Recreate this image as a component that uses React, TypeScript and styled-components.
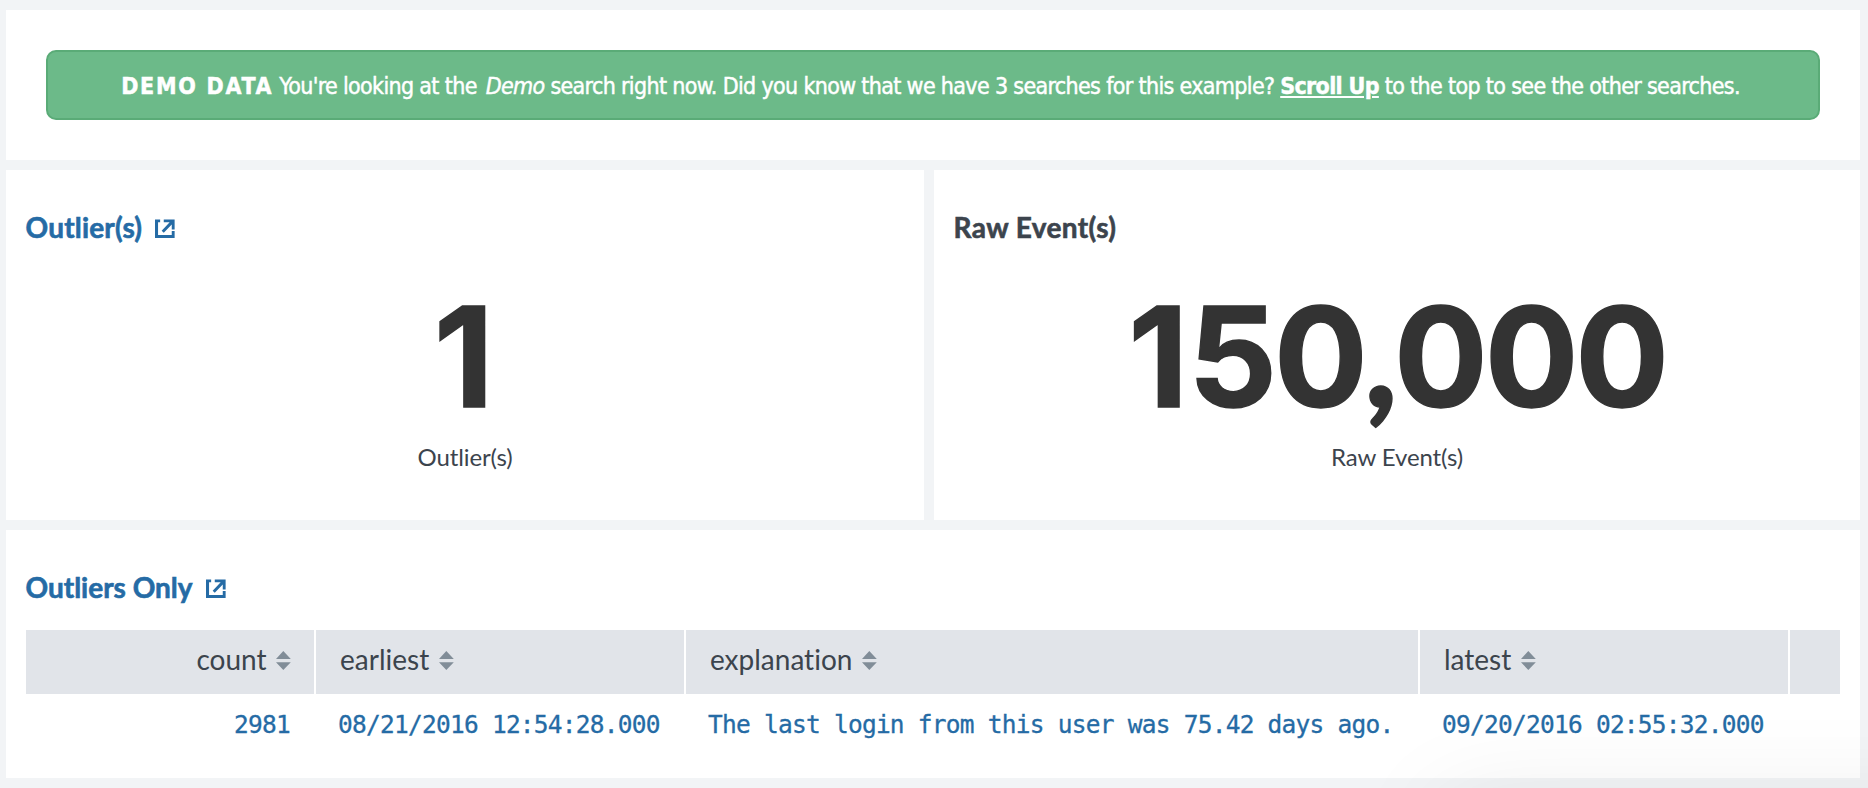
import React from "react";
import styled, { createGlobalStyle, css } from "styled-components";

const sans = `Lato, "Liberation Sans", sans-serif`;
const link = "#256ba5";
const ink = "#3c444d";

const GlobalStyle = createGlobalStyle`
  * { box-sizing: border-box; }
  body { margin: 0; background: #f2f4f6; font-family: ${sans}; color: ${ink}; font-variant-ligatures: none; }
`;

const Dashboard = styled.main`
  position: relative;
  display: flex;
  flex-direction: column;
  gap: 10px;
  height: 788px;
  padding: 10px 8px 10px 6px;
  overflow: hidden;
`;

const PanelRow = styled.div`
  display: grid;
  grid-template-columns: 918fr 926fr;
  gap: 10px;
`;

const Panel = styled.section<{ $height: number }>`
  height: ${(p) => p.$height}px;
  padding: 40px 20px 0;
  background: #fff;
`;

const Banner = styled.div`
  display: flex;
  align-items: center;
  justify-content: center;
  height: 70px;
  margin: 0 20px;
  padding: 1px 5px 0 0;
  border: 2px solid #5aab77;
  border-radius: 10px;
  background: #6cba89;
  color: #fff;
`;

const Message = styled.p`
  margin: 0;
  font: 400 23px/30px "DejaVu Sans Condensed", "DejaVu Sans", sans-serif;
  letter-spacing: -0.66px;
  white-space: nowrap;
  -webkit-text-stroke: 0.45px currentColor;
`;

const Tag = styled.strong`
  letter-spacing: 1.75px;
`;

const SearchName = styled.em`
  margin: 0 0 0 3px;
`;

const ScrollLink = styled.a`
  color: inherit;
  font-weight: 700;
  text-decoration: underline;
  text-decoration-thickness: 2px;
  text-underline-offset: 2px;
`;

const Title = styled.h2<{ $linked?: boolean; $tracking?: number }>`
  display: flex;
  align-items: center;
  gap: 13px;
  margin: 0 0 0 -0.5px;
  font-size: 28px;
  font-weight: 700;
  line-height: 34px;
  letter-spacing: ${(p) => p.$tracking ?? 0}px;
  color: ${(p) => (p.$linked ? link : ink)};
  -webkit-text-stroke: 0.6px currentColor;
`;

const Metric = styled.div`
  display: flex;
  flex-direction: column;
  align-items: center;
  margin-top: 43px;
`;

const MetricValue = styled.div<{ $inset?: number }>`
  padding-right: ${(p) => p.$inset ?? 0}px;
  font: 700 139px/140px Inter, sans-serif;
  letter-spacing: -3.2px;
  color: #333;
  -webkit-text-stroke: 1.4px currentColor;
`;

const LeadDigit = styled.span`
  letter-spacing: 0;
`;

const Comma = styled.span`
  font-family: ${sans};
  font-weight: 900;
  line-height: 0;
`;

const MetricLabel = styled.div`
  margin-top: 15px;
  font-size: 24px;
  line-height: 30px;
  letter-spacing: -0.1px;
`;

const Table = styled.div`
  margin-top: 26px;
`;

const TableRow = styled.div`
  display: grid;
  grid-template-columns: 288px 368px 732px 368px 50px;
  column-gap: 2px;
`;

const cell = css<{ $right?: boolean }>`
  display: flex;
  align-items: center;
  justify-content: ${(p) => (p.$right ? "flex-end" : "flex-start")};
  white-space: nowrap;
`;

const HeadCell = styled.div<{ $right?: boolean }>`
  ${cell}
  gap: 9.5px;
  height: 64px;
  padding: 0 23px 6px 24px;
  background: #e1e4e9;
  font-size: 28px;
  line-height: 34px;
`;

const BodyCell = styled.div<{ $right?: boolean }>`
  ${cell}
  height: 62px;
  padding: 0 24px 0 22px;
  color: ${link};
  font: 400 24.5px/30px "DejaVu Sans Mono", "Liberation Mono", monospace;
  letter-spacing: -0.76px;
  -webkit-text-stroke: 0.3px currentColor;
`;

const Icon = styled.svg<{ $drop?: number }>`
  display: block;
  flex: none;
  margin-top: ${(p) => p.$drop ?? 0}px;
  fill: currentColor;
`;

const SortGlyph = styled(Icon)`
  color: #818d98;
`;

const WindowShadow = styled.div`
  position: absolute;
  left: 1440px;
  top: 800px;
  width: 700px;
  height: 200px;
  box-shadow: 0 0 100px rgba(0, 0, 0, 0.08);
  pointer-events: none;
`;

const OpenIcon = () => (
  <Icon $drop={3} width="20" height="20" viewBox="0 0 21 20">
    <path d="M0 0h5.4v3H3.2v13.2h14.4v-4h3V19.4H0z" />
    <path d="M9.2 0h11.4v10.4h-3V5.2L9.2 14 7 11.8 15.4 3H9.2z" />
  </Icon>
);

const SortIcon = () => (
  <SortGlyph $drop={3} width="15" height="19" viewBox="0 0 15 19">
    <path d="M7.3 0 14.8 8H0zM0 11.2h14.8L7.3 19z" />
  </SortGlyph>
);

const columns = [
  { name: "count", value: "2981", right: true },
  { name: "earliest", value: "08/21/2016 12:54:28.000" },
  { name: "explanation", value: "The last login from this user was 75.42 days ago." },
  { name: "latest", value: "09/20/2016 02:55:32.000" },
];

export default function App() {
  return (
    <>
      <GlobalStyle />
      <Dashboard>
        <Panel $height={150}>
          <Banner>
            <Message>
              <Tag>DEMO DATA</Tag> You're looking at the <SearchName>Demo</SearchName> search right now. Did you know
              that we have 3 searches for this example? <ScrollLink>Scroll Up</ScrollLink> to the top to see the other
              searches.
            </Message>
          </Banner>
        </Panel>
        <PanelRow>
          <Panel $height={350}>
            <Title $linked $tracking={0.2}>
              Outlier(s) <OpenIcon />
            </Title>
            <Metric>
              <MetricValue $inset={6}>1</MetricValue>
              <MetricLabel>Outlier(s)</MetricLabel>
            </Metric>
          </Panel>
          <Panel $height={350}>
            <Title $tracking={0.4}>Raw Event(s)</Title>
            <Metric>
              <MetricValue>
                <LeadDigit>1</LeadDigit>50<Comma>,</Comma>000
              </MetricValue>
              <MetricLabel>Raw Event(s)</MetricLabel>
            </Metric>
          </Panel>
        </PanelRow>
        <Panel $height={248}>
          <Title $linked>
            Outliers Only <OpenIcon />
          </Title>
          <Table>
            <TableRow>
              {columns.map((c) => (
                <HeadCell key={c.name} $right={c.right}>
                  {c.name}
                  <SortIcon />
                </HeadCell>
              ))}
              <HeadCell />
            </TableRow>
            <TableRow>
              {columns.map((c) => (
                <BodyCell key={c.name} $right={c.right}>
                  {c.value}
                </BodyCell>
              ))}
            </TableRow>
          </Table>
        </Panel>
        <WindowShadow />
      </Dashboard>
    </>
  );
}
